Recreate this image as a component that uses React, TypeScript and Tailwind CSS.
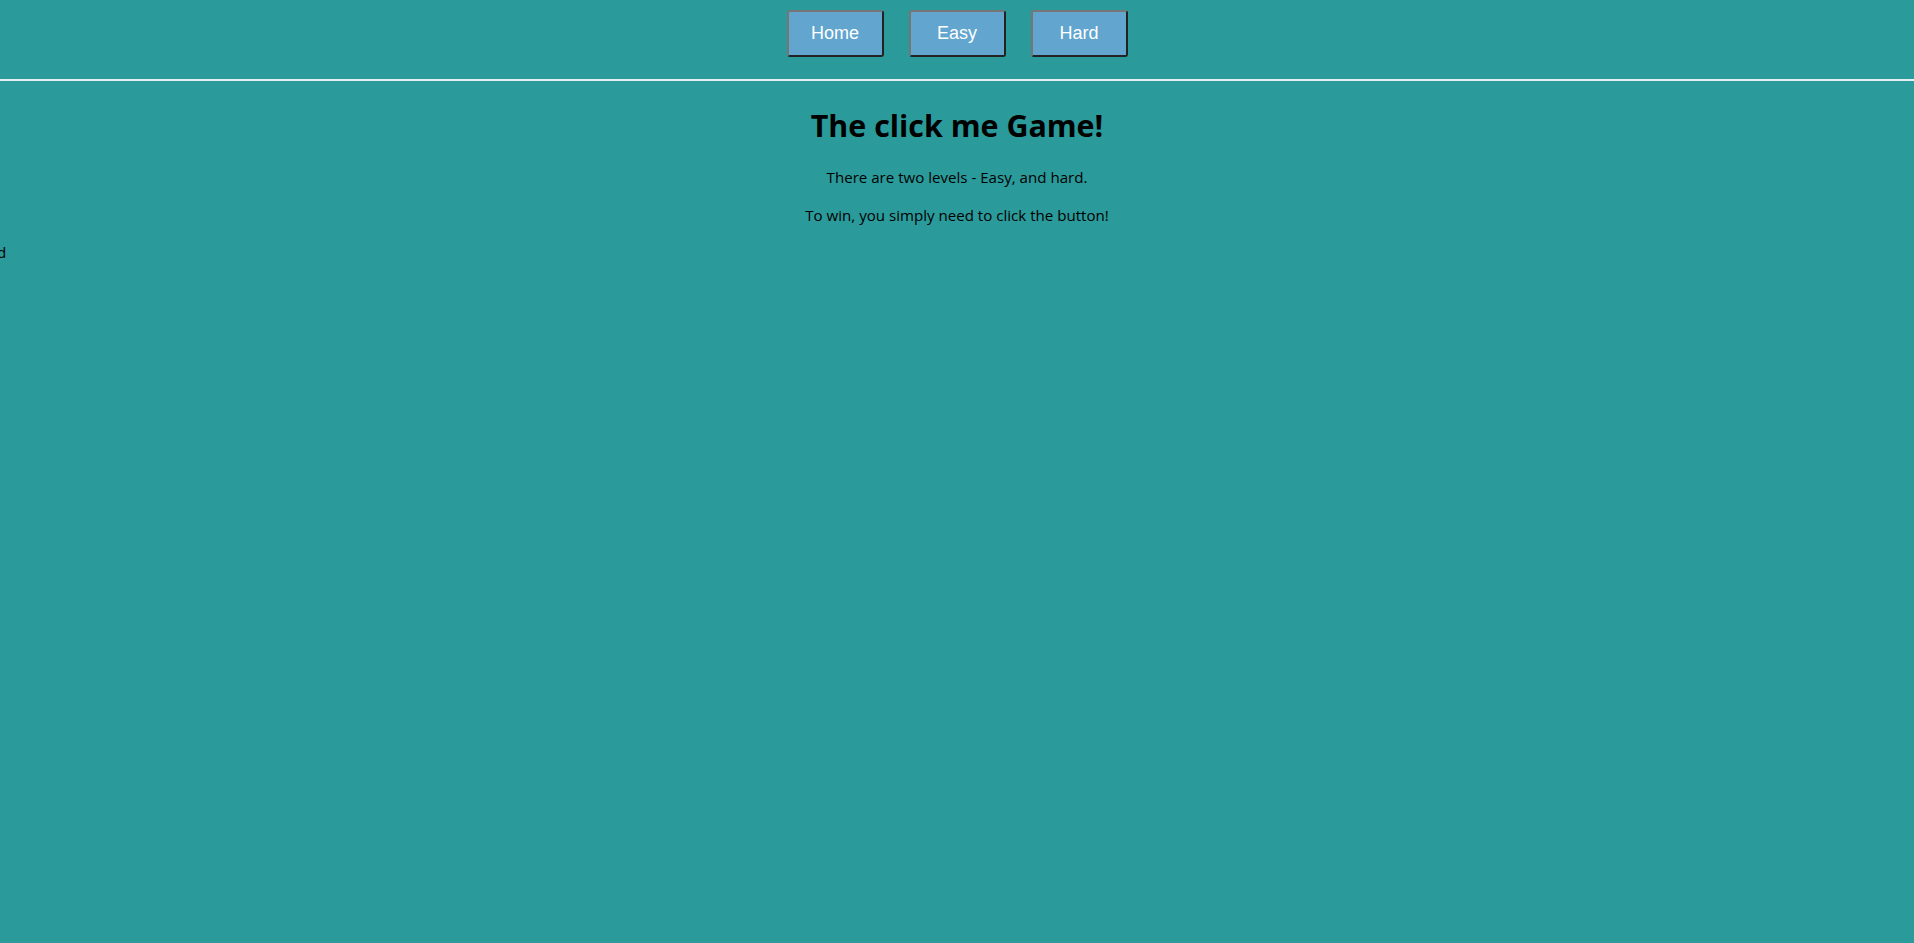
import React from "react";

export default function App() {
  const btn =
    "w-[97px] h-[47px] bg-[#62a5cf] text-white text-[18px] border-2 border-t-[#767676] border-l-[#767676] border-b-[#222] border-r-[#222] rounded-[3px] [font-family:'Liberation_Sans',Arial,sans-serif]";
  return (
    <div className="min-h-[943px] bg-[#2a9a9a] text-black [font-family:'Open_Sans','Noto_Sans',sans-serif]">
      <nav className="flex justify-center gap-[25px] pt-[10px] pb-[22px]">
        <button className={btn}>Home</button>
        <button className={btn}>Easy</button>
        <button className={btn}>Hard</button>
      </nav>
      <div className="h-[2px] bg-[#e6f0f0]" />
      <div className="text-center">
        <h1 className="pt-[24px] text-[30.4px] font-bold leading-[42px]">The click me Game!</h1>
        <p className="mt-[20px] text-[15.1px] leading-[21px]">There are two levels - Easy, and hard.</p>
        <p className="mt-[17px] text-[15.1px] leading-[21px]">To win, you simply need to click the button!</p>
      </div>
      <div className="mt-[16px] text-[15.1px] leading-[21px] -ml-[3px]">d</div>
    </div>
  );
}
